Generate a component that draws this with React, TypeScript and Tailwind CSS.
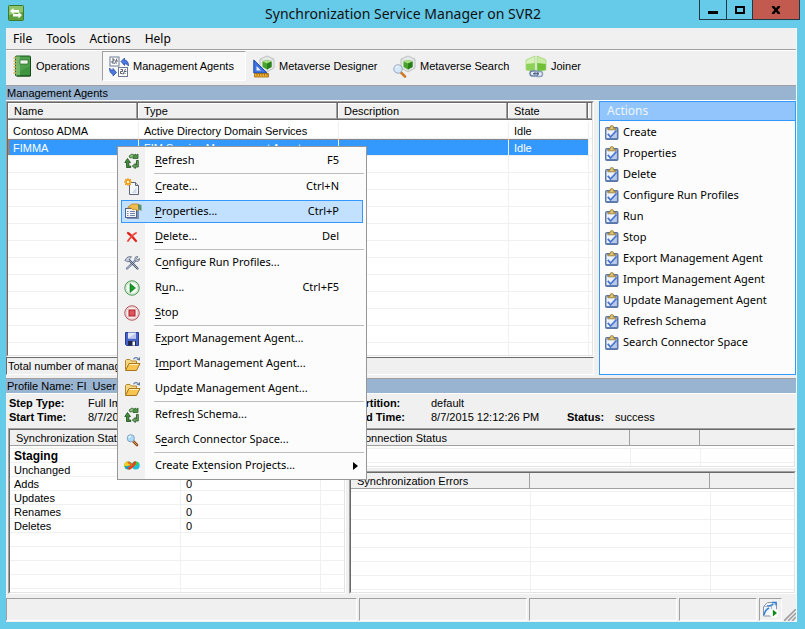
import type { ReactNode } from "react";
import clsx from "clsx";

const UI_FONT = "font-['Noto_Sans',sans-serif]";

/* ---------- icons ---------- */

function AppIcon() {
  return (
    <svg width="16" height="16" viewBox="0 0 16 16" aria-hidden="true">
      <rect x="0.5" y="0.5" width="15" height="15" rx="1" fill="#5da03c" stroke="#3c7a2c" />
      <path d="M1 1h14v6Q8 8 1 10z" fill="#8fc46c" />
      <path d="M2 6l3.500-3v2H11v2.500H5.500v2z" fill="#fff" />
      <path d="M14 10l-3.500-3v2H5v2.500h5.500v2z" fill="#fff" />
    </svg>
  );
}

function NotebookIcon() {
  return (
    <svg width="19" height="22" viewBox="0 0 19 22" aria-hidden="true">
      <rect x="2.500" y="1" width="15" height="20" rx="1" fill="#3f9440" stroke="#1f5f23" />
      <path d="M3 1.500h4v19H3z" fill="#76b86c" />
      <path d="M7 2h10v9L7 16z" fill="#5aa856" opacity=".6" />
      <rect x="7" y="5" width="8" height="4" fill="#eef6ea" stroke="#2b6b2f" strokeWidth=".7" />
      <path d="M17.500 2v19H4" stroke="#154a19" fill="none" />
      <path d="M0.500 3h3M0.500 6h3M0.500 9h3M0.500 12h3M0.500 15h3M0.500 18h3" stroke="#c9b45a" strokeWidth="1.300" />
    </svg>
  );
}

function AgentsIcon() {
  return (
    <svg width="20" height="21" viewBox="0 0 20 21" aria-hidden="true">
      <rect x="1" y="1" width="9" height="9" fill="#fff" stroke="#6c7a94" />
      <rect x="9.500" y="11.500" width="9" height="9" fill="#fff" stroke="#6c7a94" />
      <path d="M3 3h2v2H3v2h2M8 2.500L5.500 8M7 5h2M7 7h1" stroke="#33384a" fill="none" strokeWidth=".8" />
      <path d="M11.500 13.500h2v2h-2v2h2M16.500 13L14 18.500M15.500 15.500h2M15.500 17.500h1" stroke="#33384a" fill="none" strokeWidth=".8" />
      <path d="M12 5.500L15.500 2v2q4 .5 4 6-1.500-2.500-4-2.300V9.500z" fill="#4b7be0" stroke="#1d3fa0" strokeWidth=".7" />
      <path d="M7.500 16.500L4 20v-2Q.5 17.500.5 12q1.500 2.500 3.500 2.300V12.500z" fill="#4b7be0" stroke="#1d3fa0" strokeWidth=".7" />
    </svg>
  );
}

function Cube() {
  return (
    <g>
      <path d="M14 1l7 3v9l-7 4-7-4V4z" fill="#e4e8e6" stroke="#b2b9b6" strokeWidth=".8" />
      <path d="M7 4l7 3 7-3M14 7v10" stroke="#c8cfcc" strokeWidth=".7" fill="none" />
      <path d="M14 5l4.500 1.500v5.500L14 14.500 9.500 12V6.500z" fill="#48a52c" />
      <path d="M14 5l4.500 1.500L14 8.500 9.500 6.500z" fill="#a8e07e" />
      <path d="M14 8.500l4.500-2v5.500L14 14.500z" fill="#2c7d1d" />
    </g>
  );
}

function DesignerIcon() {
  return (
    <svg width="22" height="23" viewBox="0 0 22 23" aria-hidden="true">
      <Cube />
      <path d="M.8 5v13H14z" fill="#3f73df" stroke="#1a46b0" />
      <path d="M3.500 11v4.500H8z" fill="#e8eefc" />
      <path d="M1.500 18.500h14v3.500h-14z" fill="#efb02e" stroke="#9a6410" strokeWidth=".8" />
      <path d="M4 19v1.500M6.500 19v1.500M9 19v1.500M11.500 19v1.500M14 19v1.500" stroke="#6d4408" strokeWidth=".7" />
    </svg>
  );
}

function MetaSearchIcon() {
  return (
    <svg width="23" height="23" viewBox="0 0 23 23" aria-hidden="true">
      <g transform="translate(1 0)">
        <Cube />
      </g>
      <path d="M8 17.500l4 4" stroke="#d07b2c" strokeWidth="2.600" strokeLinecap="round" />
      <circle cx="5" cy="14" r="4.200" fill="#d5e8fa" stroke="#96a7b8" />
      <path d="M2.800 13q.6-2 2.600-2" stroke="#fff" fill="none" />
    </svg>
  );
}

function JoinerIcon() {
  return (
    <svg width="22" height="23" viewBox="0 0 22 23" aria-hidden="true">
      <path d="M1 5l9-4v16l-9-2z" fill="#8ed158" />
      <path d="M1 5l9-4v7L1 9z" fill="#d6f2b8" />
      <path d="M21 5l-9-4v16l9-2z" fill="#6fc035" />
      <path d="M21 5l-9-4v7l9 1z" fill="#c8eca4" />
      <path d="M1 5v10l9 2V1zM21 5v10l-9 2V1z" fill="none" stroke="#a4d67c" strokeWidth=".7" />
      <rect x="5" y="16" width="8" height="5" rx="2.500" fill="#e6ecf5" stroke="#6d83a6" strokeWidth="1.500" />
      <rect x="9.500" y="16.500" width="8" height="5" rx="2.500" fill="none" stroke="#8da0bf" strokeWidth="1.500" />
      <path d="M8 18.700h6" stroke="#4d6082" strokeWidth="1.200" />
    </svg>
  );
}

function RefreshIcon() {
  return (
    <svg width="16" height="16" viewBox="0 0 16 16" aria-hidden="true">
      <path d="M5 3L8 1l2 1-1.500 2.500L6 5z" fill="#8cc47c" stroke="#2c5f2a" strokeWidth=".8" />
      <path d="M9 5.500h5V1l-1.500 1L11 1z" fill="#4d9443" stroke="#2c5f2a" strokeWidth=".8" />
      <path d="M.8 9.500L3.500 5.500l3 4H4.800v3.500h2v1.500H2.500V9.500z" fill="#3f8f3a" stroke="#1e4d1d" strokeWidth=".8" />
      <path d="M12.500 7.500h1.800V14h-3v1.500l-3-2.500 3-2.500V12h1.200z" fill="#6aad60" stroke="#1e4d1d" strokeWidth=".8" />
    </svg>
  );
}

function CreateIcon() {
  return (
    <svg width="16" height="17" viewBox="0 0 16 17" aria-hidden="true">
      <path d="M5.500 4.500h6l3 3v9h-9z" fill="#f4f7fc" stroke="#5b6478" />
      <path d="M11.500 4.500v3h3" fill="#cbd4e4" stroke="#5b6478" />
      <path d="M12.500 9v6H8z" fill="#cdd8ec" />
      <rect x="1" y="1" width="6" height="6" fill="#f6c046" />
      <path d="M4 0v8M0 4h8M1 1l6 6M7 1L1 7" stroke="#e58f1c" strokeWidth="1" />
      <rect x="3" y="3" width="2" height="2" fill="#fff3b5" />
    </svg>
  );
}

function PropertiesIcon() {
  return (
    <svg width="18" height="17" viewBox="0 0 18 17" aria-hidden="true">
      <path d="M3 7h12v9H3z" fill="#7d90b6" />
      <rect x="1.500" y="5.500" width="11" height="9" fill="#f3f5fa" stroke="#52638c" />
      <path d="M3 8.500h1.500M6 8.500h5M3 10.500h1.500M6 10.500h5M3 12.500h1.500M6 12.500h5" stroke="#7484a6" />
      <path d="M4 4l4-3h6l2 3-2 4-3-2-2 1-2-2H4z" fill="#f0bd4d" stroke="#b17a1c" strokeWidth=".7" />
      <path d="M14 1l3.500 1v6L14 6z" fill="#5d8f69" />
    </svg>
  );
}

function DeleteIcon() {
  return (
    <svg width="16" height="16" viewBox="0 0 16 16" aria-hidden="true">
      <path d="M4 4q3 2 8 8" stroke="#e0241b" strokeWidth="2.200" fill="none" strokeLinecap="round" />
      <path d="M12 4q-4 2-8 8" stroke="#f0483a" strokeWidth="1.900" fill="none" strokeLinecap="round" />
    </svg>
  );
}

function ToolsIcon() {
  return (
    <svg width="16" height="16" viewBox="0 0 16 16" aria-hidden="true">
      <path d="M12 5L3 13.500" stroke="#5a6a8a" strokeWidth="2.200" strokeLinecap="round" />
      <path d="M12 5L3 13.500" stroke="#dbe2ee" strokeWidth=".9" strokeLinecap="round" />
      <path d="M5 5l8.500 8.500" stroke="#46516b" strokeWidth="2.200" strokeLinecap="round" />
      <path d="M5 5l8.500 8.500" stroke="#b7c1d4" strokeWidth=".9" strokeLinecap="round" />
      <path d="M.8 5.500L3 2.500q2-1.500 4.500-.8L5.500 4l.5 1.500-2 1.500-1.500-.8z" fill="#c4cddc" stroke="#55607a" strokeWidth=".7" />
      <path d="M11 2.500q1.500-1.500 3-.8l-1.500 2 1.200 1 1.800-1.200q.4 2.500-2 3l-2.700-1z" fill="#c4cddc" stroke="#55607a" strokeWidth=".7" />
    </svg>
  );
}

function RunIcon() {
  return (
    <svg width="16" height="16" viewBox="0 0 16 16" aria-hidden="true">
      <circle cx="8" cy="8" r="7.200" fill="#f4faf3" stroke="#3c9145" />
      <circle cx="8" cy="8" r="5.900" fill="none" stroke="#bddfbe" strokeWidth=".8" />
      <path d="M6 3.500v9L11.500 8z" fill="#159a26" stroke="#0a6a16" strokeWidth=".6" />
    </svg>
  );
}

function StopIcon() {
  return (
    <svg width="16" height="16" viewBox="0 0 16 16" aria-hidden="true">
      <circle cx="8" cy="8" r="7.200" fill="#fbf1f1" stroke="#b04a50" />
      <circle cx="8" cy="8" r="5.900" fill="none" stroke="#e2bcbe" strokeWidth=".8" />
      <rect x="5" y="5" width="6" height="6" fill="#e0555b" stroke="#a8232c" />
    </svg>
  );
}

function SaveIcon() {
  return (
    <svg width="16" height="16" viewBox="0 0 16 16" aria-hidden="true">
      <path d="M1.500 1.500h13v13h-12l-1-1z" fill="#4763c9" stroke="#2a3d92" />
      <rect x="4" y="1.500" width="8" height="6" fill="#e3e9f8" />
      <path d="M4 7.500L12 2v5.500z" fill="#bcc9ec" />
      <rect x="4" y="10" width="8" height="4.500" fill="#20274a" />
      <rect x="8.500" y="10.500" width="2.500" height="4" fill="#fff" />
    </svg>
  );
}

function FolderIcon() {
  return (
    <svg width="17" height="16" viewBox="0 0 17 16" aria-hidden="true">
      <path d="M1.500 13.500v-9l1-1h3.500l1.500 1.500h5v3" fill="#f5d683" stroke="#b5882c" />
      <path d="M1.500 14.500L5 7.500h11l-3.500 7z" fill="#f6c451" stroke="#a87518" />
      <path d="M5.500 8.500h9" stroke="#fdeebb" />
      <path d="M9.500 3.200Q11 .8 14 2.200" stroke="#5f7ba4" strokeWidth="1.200" fill="none" />
      <path d="M12.500 3.800l3.500.7V1z" fill="#5f7ba4" />
    </svg>
  );
}

function MagnifierIcon() {
  return (
    <svg width="16" height="16" viewBox="0 0 16 16" aria-hidden="true">
      <path d="M9.500 9.500l3.500 3.500" stroke="#8d4a1a" strokeWidth="2.600" strokeLinecap="round" />
      <path d="M9.500 9.500l3.200 3.200" stroke="#e29a58" strokeWidth="1" strokeLinecap="round" />
      <circle cx="6.800" cy="6.300" r="3.600" fill="#a9dcf8" stroke="#88a2bd" />
      <path d="M4.800 5.800q.5-1.600 2-1.700" stroke="#fff" fill="none" strokeWidth="1.200" />
    </svg>
  );
}

function ExtensionIcon() {
  return (
    <svg width="16" height="16" viewBox="0 0 16 16" aria-hidden="true">
      <circle cx="4.300" cy="7.500" r="4" fill="#31b54a" />
      <path d="M.3 7.500a4 4 0 0 1 4-4l3 2-3 3.500z" fill="#f7d21e" />
      <path d="M1 9.500q3 3.500 6.300 0L4.300 7.500z" fill="#1f8fe0" />
      <circle cx="11.700" cy="7.500" r="4" fill="#22c0d8" />
      <path d="M8.500 4.800q3-2.800 6.500.4l-3.300 2.800z" fill="#3fd03c" />
      <path d="M5.500 10.200Q9 8.500 10.800 4.800" stroke="#e5431c" strokeWidth="2.800" fill="none" strokeLinecap="round" />
      <path d="M4.500 4.500L7.500 6.800" stroke="#f0641e" strokeWidth="2" strokeLinecap="round" />
    </svg>
  );
}

function ClipboardIcon() {
  return (
    <svg width="14" height="15" viewBox="0 0 14 15" aria-hidden="true">
      <rect x=".5" y="2.500" width="12.500" height="12" rx="1" fill="#5f7fb4" stroke="#5a75a6" />
      <rect x="1.500" y="3.500" width="10" height="9.500" fill="#eef3fb" />
      <path d="M11.500 6v7H4z" fill="#b9cbea" />
      <path d="M2.800 4.800V3.300h2q0-2.800 2-2.800t2 2.800h2v1.500z" fill="#dcc272" stroke="#8c7433" strokeWidth=".8" />
      <path d="M2.800 8.800l2.700 3.200 6-6.500" stroke="#4b74cc" strokeWidth="1.800" fill="none" />
    </svg>
  );
}

function ServerIcon() {
  return (
    <svg width="17" height="17" viewBox="0 0 17 17" aria-hidden="true">
      <path d="M1.500 5.500l4-4h9v9l-4 4.500h-9z" fill="#f1f4f8" stroke="#8c97a6" />
      <path d="M1.500 5.500h8l5-4M9.500 5.500V10" fill="none" stroke="#aab3bf" />
      <path d="M2 14q1-5 5-7" stroke="#2f7fd6" strokeWidth="1.500" fill="none" />
      <path d="M5 4.500q3 1 6-1.500M10 1.500h4v3" stroke="#2f7fd6" strokeWidth="1.300" fill="none" />
      <circle cx="12" cy="12" r="4.500" fill="#fff" />
      <path d="M10.800 8.500v7l4.200-3.500z" fill="#0d8a1a" />
    </svg>
  );
}

/* ---------- data ---------- */

const toolbar = [
  { label: "Operations", icon: <NotebookIcon />, width: "w-24" },
  { label: "Management Agents", icon: <AgentsIcon />, width: "w-36", pressed: true },
  { label: "Metaverse Designer", icon: <DesignerIcon />, width: "w-35" },
  { label: "Metaverse Search", icon: <MetaSearchIcon />, width: "w-33" },
  { label: "Joiner", icon: <JoinerIcon />, width: "w-20" },
];

const agents = [
  { name: "Contoso ADMA", type: "Active Directory Domain Services", state: "Idle" },
  { name: "FIMMA", type: "FIM Service Management Agent", state: "Idle", selected: true },
];

const actions = [
  "Create",
  "Properties",
  "Delete",
  "Configure Run Profiles",
  "Run",
  "Stop",
  "Export Management Agent",
  "Import Management Agent",
  "Update Management Agent",
  "Refresh Schema",
  "Search Connector Space",
];

interface MenuEntry {
  // "&" precedes the access key
  label: string;
  icon: ReactNode;
  keys?: string;
  active?: boolean;
  submenu?: boolean;
}

const menuGroups: MenuEntry[][] = [
  [{ label: "&Refresh", icon: <RefreshIcon />, keys: "F5" }],
  [
    { label: "&Create...", icon: <CreateIcon />, keys: "Ctrl+N" },
    { label: "&Properties...", icon: <PropertiesIcon />, keys: "Ctrl+P", active: true },
    { label: "&Delete...", icon: <DeleteIcon />, keys: "Del" },
  ],
  [
    { label: "C&onfigure Run Profiles...", icon: <ToolsIcon /> },
    { label: "R&un...", icon: <RunIcon />, keys: "Ctrl+F5" },
    { label: "&Stop", icon: <StopIcon /> },
  ],
  [
    { label: "E&xport Management Agent...", icon: <SaveIcon /> },
    { label: "I&mport Management Agent...", icon: <FolderIcon /> },
    { label: "Upd&ate Management Agent...", icon: <FolderIcon /> },
  ],
  [
    { label: "Refres&h Schema...", icon: <RefreshIcon /> },
    { label: "S&earch Connector Space...", icon: <MagnifierIcon /> },
  ],
  [{ label: "Create Ex&tension Projects...", icon: <ExtensionIcon />, submenu: true }],
];

const statistics = [
  ["Unchanged", ""],
  ["Adds", "0"],
  ["Updates", "0"],
  ["Renames", "0"],
  ["Deletes", "0"],
];

/* ---------- building blocks ---------- */

function Sunken({ className, children }: { className?: string; children: ReactNode }) {
  return (
    <div className={clsx("flex min-w-0 border border-t-[#a0a0a0] border-l-[#a0a0a0] border-r-white border-b-white", className)}>
      <div className="min-w-0 flex-1 overflow-hidden border border-t-[#696969] border-l-[#696969] border-r-[#e3e3e3] border-b-[#e3e3e3] bg-white">
        {children}
      </div>
    </div>
  );
}

function SectionBar({ children }: { children: ReactNode }) {
  return (
    <div className="flex h-4 shrink-0 items-center border-t border-b border-t-[#a0a0a0] border-b-white bg-[#99b4d1] px-px whitespace-pre">
      {children}
    </div>
  );
}

interface GridProps {
  columns: { title: string; width?: string }[];
  rows: ReactNode[][];
  fill: number;
}

function DetailGrid({ columns, rows, fill }: GridProps) {
  const blank = columns.map(() => "");
  const all = [...rows, ...Array.from({ length: fill }, () => blank)];
  return (
    <table className="w-full table-fixed border-separate border-spacing-0">
      <thead>
        <tr>
          {columns.map((c, i) => (
            <th
              key={i}
              className={clsx(
                "h-4 border-r border-b border-[#a0a0a0] bg-[#f0f0f0] px-1.5 text-left leading-3.5 font-normal whitespace-nowrap last:border-r-0",
                c.width
              )}
            >
              {c.title}
            </th>
          ))}
        </tr>
      </thead>
      <tbody>
        <tr>
          {columns.map((_, i) => (
            <td key={i} className="h-[3px] border-b border-[#f0f0f0] p-0" />
          ))}
        </tr>
        {all.map((row, r) => (
          <tr key={r}>
            {row.map((cell, i) => (
              <td
                key={i}
                className="h-3.5 border-b border-l border-[#f0f0f0] px-[5px] py-0 leading-3 whitespace-nowrap first:border-l-0 first:pl-1"
              >
                {cell}
              </td>
            ))}
          </tr>
        ))}
      </tbody>
    </table>
  );
}

function AccessLabel({ text }: { text: string }) {
  const at = text.indexOf("&");
  return (
    <span>
      {text.slice(0, at)}
      <span className="underline underline-offset-2">{text[at + 1]}</span>
      {text.slice(at + 2)}
    </span>
  );
}

function ContextMenu() {
  return (
    <div
      role="menu"
      className={clsx(
        "absolute top-[146px] left-[117px] z-10 w-[250px] border border-[#979797] bg-[linear-gradient(to_right,#f1f1f1_27px,#fcfcfc_27px)] py-px text-[11px]",
        UI_FONT
      )}
    >
      {menuGroups.map((group, g) => (
        <div key={g}>
          {g > 0 && <div role="separator" className="mr-0.5 ml-9 h-px bg-[#bdbdbd]" />}
          {group.map((item) => (
            <div key={item.label} className="flex h-[25px] items-center px-[3px]">
              <button
                type="button"
                role="menuitem"
                className={clsx(
                  "flex h-[23px] flex-1 items-center border text-left",
                  item.active ? "border-[#3399ff] bg-[#c2e0ff]" : "border-transparent"
                )}
              >
                <span className="flex w-[33px] pl-0.5">{item.icon}</span>
                <AccessLabel text={item.label} />
                <span className={clsx("ml-auto", item.submenu ? "pr-1" : "pr-[23px]")}>
                  {item.submenu ? (
                    <svg width="5" height="8" viewBox="0 0 5 8" aria-hidden="true">
                      <path d="M0 0v8l5-4z" fill="#000" />
                    </svg>
                  ) : (
                    item.keys
                  )}
                </span>
              </button>
            </div>
          ))}
        </div>
      ))}
    </div>
  );
}

function TitleBar() {
  return (
    <header className="flex h-7 shrink-0 items-start">
      <div className="w-[101px] pt-[5px] pl-0.5">
        <AppIcon />
      </div>
      <h1 className={clsx("flex-1 text-center text-[14px] leading-7 text-[#111]", UI_FONT)}>
        Synchronization Service Manager on SVR2
      </h1>
      <div className="-mr-[3px] flex h-5 border border-t-0 border-[#1f3a46]">
        <button type="button" aria-label="Minimize" className="flex w-[27px] items-center justify-center border-r border-[#1f3a46]">
          <svg width="10" height="10" viewBox="0 0 10 10">
            <path d="M0 6h10v3H0z" />
          </svg>
        </button>
        <button type="button" aria-label="Maximize" className="flex w-[26px] items-center justify-center border-r border-[#1f3a46]">
          <svg width="10" height="8" viewBox="0 0 10 8">
            <path d="M1 1h8v6H1z" fill="none" stroke="#000" strokeWidth="2" />
          </svg>
        </button>
        <button type="button" aria-label="Close" className="flex w-[46px] items-center justify-center bg-[#c35a50]">
          <svg width="10" height="8" viewBox="0 0 10 8">
            <path d="M1.500 0l7 8M8.500 0l-7 8" stroke="#000" strokeWidth="2.500" />
          </svg>
        </button>
      </div>
    </header>
  );
}

function AgentList() {
  const headers = [
    { title: "Name", width: "w-[130px]" },
    { title: "Type", width: "w-[200px]" },
    { title: "Description", width: "w-[170px]" },
    { title: "State", width: "w-[80px]" },
    { title: "" },
  ];
  return (
    <Sunken className="h-0 grow">
      <table className="w-full table-fixed border-separate border-spacing-0">
        <thead>
          <tr>
            {headers.map((h, i) => (
              <th
                key={i}
                className={clsx(
                  "h-[17px] border-r border-b border-[#696969] bg-[#f0f0f0] px-1.5 text-left leading-3.5 font-normal shadow-[inset_-1px_-1px_0_#a0a0a0,inset_1px_1px_0_#fff] last:border-r-0",
                  h.width
                )}
              >
                {h.title}
              </th>
            ))}
          </tr>
        </thead>
        <tbody>
          <tr>
            <td colSpan={5} className="h-0.5 p-0" />
          </tr>
          {agents.map((a) => (
            <tr key={a.name} className={a.selected ? "text-white" : undefined}>
              {[a.name, a.type, "", a.state, null].map((cell, i) => (
                <td
                  key={i}
                  className={clsx(
                    "h-[17px] border-b border-l border-[#f0f0f0] px-[5px] pb-0 leading-3.5 whitespace-nowrap first:border-l-0",
                    a.selected && cell !== null
                      ? "border-t border-t-[#d9762b] bg-[#3399ff] pt-0 [border-top-style:dotted] first:shadow-[inset_1px_0_0_#d9762b]"
                      : "pt-px"
                  )}
                >
                  {cell}
                </td>
              ))}
            </tr>
          ))}
          {Array.from({ length: 12 }, (_, r) => (
            <tr key={r}>
              {headers.map((_, i) => (
                <td key={i} className="h-[17px] border-b border-l border-[#f0f0f0] first:border-l-0" />
              ))}
            </tr>
          ))}
        </tbody>
      </table>
    </Sunken>
  );
}

function ActionsPanel() {
  return (
    <aside className={clsx("w-[197px] shrink-0 border border-[#3399ff] bg-[#fcfcfc] pb-[21px] text-[11px]", UI_FONT)}>
      <h2 className="mb-px h-[19px] border-b border-[#3399ff] bg-[#92c5fb] pl-[7px] text-[12px] leading-[18px] text-[#eef6ff]">
        Actions
      </h2>
      {actions.map((label) => (
        <button key={label} type="button" className="flex h-[21px] w-full items-center gap-1 pl-[5px] text-left">
          <ClipboardIcon />
          {label}
        </button>
      ))}
    </aside>
  );
}

function RunDetails() {
  return (
    <dl className="grid shrink-0 grid-cols-[79px_264px_79px_136px_48px_1fr] pt-0.5 pb-1 pl-[3px] leading-3.5 whitespace-nowrap [&_dt]:font-bold">
      <dt>Step Type:</dt>
      <dd>Full Import (Stage Only)</dd>
      <dt>Partition:</dt>
      <dd className="col-span-3">default</dd>
      <dt>Start Time:</dt>
      <dd>8/7/2015 12:12:18 PM</dd>
      <dt>End Time:</dt>
      <dd>8/7/2015 12:12:26 PM</dd>
      <dt>Status:</dt>
      <dd>success</dd>
    </dl>
  );
}

function StatusBar() {
  const cell = "border border-t-[#a0a0a0] border-l-[#a0a0a0] border-r-white border-b-white";
  return (
    <footer className="mt-1 flex h-6 shrink-0 gap-0.5 pb-px">
      <div className={clsx("flex-1", cell)} />
      <div className={clsx("w-[168px]", cell)} />
      <div className={clsx("w-[148px]", cell)} />
      <div className={clsx("w-[78px]", cell)} />
      <div className={clsx("flex w-[23px] items-center justify-center", cell)}>
        <ServerIcon />
      </div>
      <svg width="12" height="12" viewBox="0 0 12 12" className="self-end" aria-hidden="true">
        <path d="M0 12L12 0M4 12l8-8M8 12l4-4" stroke="#a0a0a0" strokeWidth="1.600" />
      </svg>
    </footer>
  );
}

export default function App() {
  return (
    <div className="relative flex h-screen flex-col overflow-hidden bg-[#66cae9] pr-2 pb-[7px] pl-1.5 font-['Liberation_Sans',sans-serif] text-[11px] text-black">
      <TitleBar />
      <main className="flex min-h-0 flex-1 flex-col border-r border-white/60 bg-[#f0f0f0]">
        <nav className={clsx("flex h-[22px] shrink-0 items-center gap-3.5 border-b border-[#a0a0a0] pl-[7px] text-[12px]", UI_FONT)}>
          {["File", "Tools", "Actions", "Help"].map((label) => (
            <button key={label} type="button">
              {label}
            </button>
          ))}
        </nav>
        <div className="flex h-[35px] shrink-0 items-start border-t border-white">
          {toolbar.map((b) => (
            <button
              key={b.label}
              type="button"
              aria-pressed={b.pressed}
              className={clsx(
                "flex h-[30px] items-center gap-1 border pl-1.5 whitespace-nowrap",
                b.width,
                b.pressed ? "border-t-[#a0a0a0] border-l-[#a0a0a0] border-r-white border-b-white bg-[#f8f8f8]" : "border-transparent"
              )}
            >
              {b.icon}
              {b.label}
            </button>
          ))}
        </div>

        <SectionBar>Management Agents</SectionBar>
        <div className="flex shrink-0 gap-[5px] pb-[3px]">
          <div className="flex min-w-0 flex-1 flex-col">
            <AgentList />
            <div className="h-[18px] shrink-0 border border-t-[#696969] border-l-[#696969] border-r-white border-b-white px-px leading-4">
              Total number of management agents: 2
            </div>
          </div>
          <ActionsPanel />
        </div>

        <SectionBar>Profile Name: FI  User Name: SVR2\Administrator</SectionBar>
        <RunDetails />
        <div className="flex min-h-0 flex-1 gap-[3px] pl-0.5">
          <Sunken className="w-[338px] shrink-0">
            <DetailGrid
              columns={[{ title: "Synchronization Statistics", width: "w-[170px]" }, { title: "", width: "w-[140px]" }, { title: "" }]}
              rows={[
                [<b className="text-[12px]">Staging</b>, "", ""],
                ...statistics.map(([label, count]) => [label, count, ""]),
              ]}
              fill={8}
            />
          </Sunken>
          <div className="flex min-w-0 flex-1 flex-col gap-[3px]">
            <Sunken className="h-10 shrink-0">
              <DetailGrid
                columns={[{ title: "Connection Status", width: "w-[279px]" }, { title: "", width: "w-[70px]" }, { title: "" }]}
                rows={[]}
                fill={2}
              />
            </Sunken>
            <Sunken className="min-h-0 flex-1">
              <DetailGrid
                columns={[{ title: "Synchronization Errors", width: "w-[179px]" }, { title: "", width: "w-[180px]" }, { title: "" }]}
                rows={[]}
                fill={10}
              />
            </Sunken>
          </div>
        </div>
        <StatusBar />
      </main>
      <ContextMenu />
    </div>
  );
}
